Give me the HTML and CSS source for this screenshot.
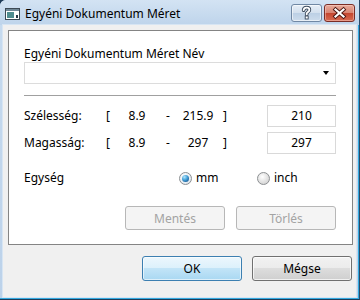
FILE: index.html
```html
<!DOCTYPE html>
<html lang="hu">
<head>
<meta charset="utf-8">
<title>Egyéni Dokumentum Méret</title>
<link rel="stylesheet" href="styles.css">
</head>
<body>
<div class="window">
  <div class="titlebar">
    <svg class="app-icon" width="15" height="12" viewBox="0 0 15 12">
      <rect x="0.5" y="0.5" width="14" height="11" fill="#ffffff" stroke="#3d4a55"/>
      <rect x="1" y="1" width="13" height="2" fill="#6f8796"/>
      <rect x="2" y="4" width="7" height="6" fill="#4f8c8f"/>
      <rect x="11" y="7" width="2" height="3" fill="#2a3a48"/>
    </svg>
    <span class="title">Egyéni Dokumentum Méret</span>
    <div class="caption-buttons">
      <div class="cap-btn help">
        <svg width="29" height="16" viewBox="0 0 29 16">
          <g fill="none" stroke-linecap="round">
            <path d="M11.6 5.2 C11.8 3.4 13 2.6 14.6 2.6 C16.4 2.6 17.4 3.6 17.4 4.9 C17.4 6.6 15.2 7 14.7 8.4 L14.7 9.6" stroke="#3b4a5c" stroke-width="3.6"/>
            <path d="M11.6 5.2 C11.8 3.4 13 2.6 14.6 2.6 C16.4 2.6 17.4 3.6 17.4 4.9 C17.4 6.6 15.2 7 14.7 8.4 L14.7 9.6" stroke="#ffffff" stroke-width="1.8"/>
          </g>
          <rect x="13.2" y="11" width="3" height="3" fill="#ffffff" stroke="#3b4a5c" stroke-width="0.9"/>
        </svg>
      </div>
      <div class="cap-btn close">
        <svg width="29" height="16" viewBox="0 0 29 16">
          <g stroke-linecap="square">
            <path d="M10.5 4.5 L18.5 11.5 M18.5 4.5 L10.5 11.5" stroke="#4a1510" stroke-width="4"/>
            <path d="M10.5 4.5 L18.5 11.5 M18.5 4.5 L10.5 11.5" stroke="#ffffff" stroke-width="2.2"/>
          </g>
        </svg>
      </div>
    </div>
  </div>
  <div class="client">
    <div class="panel">
      <div class="field-label">Egyéni Dokumentum Méret Név</div>
      <div class="combo"><span class="arrow"></span></div>
      <div class="separator"></div>
      <div class="size-grid">
        <span class="lbl">Szélesség:</span>
        <span class="br">[</span>
        <span class="num">8.9</span>
        <span class="dash">-</span>
        <span class="num">215.9</span>
        <span class="br br-close">]</span>
        <div class="input">210</div>

        <span class="lbl">Magasság:</span>
        <span class="br">[</span>
        <span class="num">8.9</span>
        <span class="dash">-</span>
        <span class="num">297</span>
        <span class="br br-close">]</span>
        <div class="input">297</div>
      </div>
      <div class="unit-row">
        <span class="lbl">Egység</span>
        <label class="radio-opt opt-mm"><span class="radio checked"><span class="dot"></span></span><span>mm</span></label>
        <label class="radio-opt opt-inch"><span class="radio"></span><span>inch</span></label>
      </div>
      <div class="action-row">
        <button class="btn-disabled" disabled>Mentés</button>
        <button class="btn-disabled" disabled>Törlés</button>
      </div>
    </div>
    <div class="footer">
      <button class="btn btn-default">OK</button>
      <button class="btn">Mégse</button>
    </div>
  </div>
</div>
</body>
</html>
```
FILE: styles.css
```css
* { box-sizing: border-box; }
html, body { margin: 0; padding: 0; }
body {
  width: 360px;
  height: 300px;
  overflow: hidden;
  background: #1f3b58;
  font-family: "Segoe UI", "Noto Sans", sans-serif;
  font-size: 12px;
  color: #000;
}
.window {
  width: 360px;
  height: 300px;
  display: flex;
  flex-direction: column;
  background: linear-gradient(#c7dbef, #bcd2ea);
  border-right: 1px solid #2c4a68;
  border-bottom: 1px solid #1e3b58;
  border-top-left-radius: 6px;
  box-shadow: inset -1px -1px 0 #33a9df;
  overflow: hidden;
}
.titlebar {
  flex: none;
  height: 25px;
  display: flex;
  align-items: center;
  padding-left: 5px;
  background: linear-gradient(#d3e3f3, #bed4eb);
}
.app-icon { flex: none; margin-top: 2px; }
.title { margin-left: 5px; margin-top: 2px; white-space: nowrap; }
.caption-buttons {
  margin-left: auto;
  align-self: flex-start;
  margin-top: 4px;
  margin-right: 4px;
  display: flex;
  gap: 2px;
}
.cap-btn {
  width: 31px;
  height: 18px;
  border-radius: 3px;
  display: flex;
  align-items: center;
  justify-content: center;
}
.help {
  border: 1px solid #7088a4;
  background: linear-gradient(#e6eef7 0%, #d3e0ee 48%, #bcd0e5 52%, #cddcec 100%);
  box-shadow: inset 0 0 0 1px rgba(255,255,255,0.55);
}
.close {
  border: 1px solid #7a2d26;
  background: linear-gradient(#e8ab9c 0%, #d98573 48%, #c4462f 52%, #d86b52 100%);
  box-shadow: inset 0 0 0 1px rgba(255,220,210,0.45);
}
.client {
  flex: 1;
  margin: 0 3px 2px 3px;
  background: #f0f0f0;
  padding: 5px 3px 0 5px;
  display: flex;
  flex-direction: column;
  box-shadow: 0 0 0 1px #d7e5f3;
}
.panel {
  flex: none;
  height: 215px;
  background: #fff;
  border: 1px solid #848484;
  padding: 15px 16px 0 15px;
  display: flex;
  flex-direction: column;
}
.field-label { line-height: 16px; height: 16px; white-space: nowrap; }
.combo {
  height: 22px;
  border: 1px solid #dcdcdc;
  background: #fff;
  display: flex;
  align-items: center;
  justify-content: flex-end;
  padding-right: 6px;
}
.arrow {
  width: 0;
  height: 0;
  border-left: 3.5px solid transparent;
  border-right: 3.5px solid transparent;
  border-top: 4px solid #000;
}
.separator {
  height: 1px;
  background: #a0a0a0;
  margin-top: 11px;
}
.size-grid {
  margin-top: 9px;
  display: grid;
  grid-template-columns: 82px 10px 42px 20px 40px 49px 69px;
  grid-auto-rows: 22px;
  row-gap: 5px;
  align-items: center;
  line-height: 16px;
}
.lbl { white-space: nowrap; }
.num, .dash { text-align: center; }
.br-close { padding-left: 5px; }
.input {
  height: 22px;
  border: 1px solid #d9d9d9;
  background: #fff;
  text-align: center;
  line-height: 20px;
}
.unit-row {
  margin-top: 13px;
  height: 22px;
  display: flex;
  align-items: center;
  line-height: 16px;
}
.unit-row .lbl { width: 155px; }
.radio-opt { display: flex; align-items: center; gap: 4px; }
.opt-mm { width: 78px; }
.radio {
  width: 13px;
  height: 13px;
  border-radius: 50%;
  border: 1px solid #8c8f92;
  background: radial-gradient(circle at 40% 35%, #ffffff 0%, #e6e6e6 45%, #c9c9c9 100%);
  display: flex;
  align-items: center;
  justify-content: center;
}
.radio.checked {
  background: radial-gradient(circle at 40% 35%, #ffffff 0%, #e8eef3 60%, #c9d3dc 100%);
}
.dot {
  width: 7px;
  height: 7px;
  border-radius: 50%;
  background: radial-gradient(circle at 35% 30%, #b4e6fb 0%, #4aa6dc 40%, #1a5f9b 80%, #174e80 100%);
}
.action-row {
  margin-top: 17px;
  display: flex;
  justify-content: flex-end;
  gap: 11px;
}
.btn-disabled {
  width: 100px;
  height: 24px;
  border: 1px solid #b7b7b7;
  border-radius: 3px;
  background: #f4f4f4;
  color: #a3a3a3;
  font-family: inherit;
  font-size: 12px;
  padding: 0;
}
.footer {
  flex: none;
  margin-top: 11px;
  padding-right: 1px;
  display: flex;
  justify-content: flex-end;
  gap: 10px;
}
.btn {
  width: 100px;
  height: 25px;
  border: 1px solid #707070;
  border-radius: 3px;
  background: linear-gradient(#f2f2f2 0%, #ebebeb 50%, #dddddd 50%, #cfcfcf 100%);
  box-shadow: inset 0 0 0 1px rgba(255,255,255,0.7);
  font-family: inherit;
  font-size: 12px;
  color: #000;
  padding: 0;
}
.btn-default {
  border-color: #3c7fb1;
  background: linear-gradient(#ecf7fd 0%, #dcf0fb 50%, #c2e4f7 50%, #a9d8f2 100%);
  box-shadow: inset 0 0 0 1px rgba(255,255,255,0.6);
}
```
